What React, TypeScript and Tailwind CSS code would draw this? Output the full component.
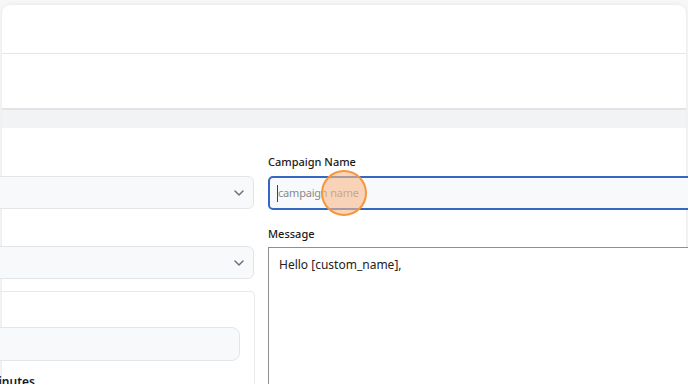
import React from 'react';

const font = { fontFamily: '"Noto Sans", "Open Sans", sans-serif' };

const Chevron = () => (
  <svg width="10" height="6" viewBox="0 0 10 6" fill="none" className="text-gray-500">
    <path d="M1 1l4 4 4-4" stroke="currentColor" strokeWidth="1.5" strokeLinecap="round" strokeLinejoin="round" />
  </svg>
);

const Select = () => (
  <div className="h-[33px] rounded-md border border-[#e3e5e8] bg-[#f8f9fa] flex items-center justify-end pr-[9px]">
    <Chevron />
  </div>
);

export default function App() {
  return (
    <div className="w-[688px] h-[384px] overflow-hidden bg-[#f7f7f8] pt-[5px]" style={font}>
      <div className="mx-[2px] bg-white rounded-t-lg shadow-[0_0_4px_rgba(0,0,0,0.08)] h-full">
        {/* header */}
        <div className="h-[49px] border-b border-[#e6e7ea]" />
        <div className="h-[56px] border-b-2 border-[#e1e3e7]" />
        <div className="h-[18px] bg-[#f2f3f5]" />

        {/* form */}
        <div className="-ml-[202px] flex gap-[14px] pt-[26px]">
          <div className="w-[454px] shrink-0 flex flex-col">
            <div className="h-[20px] mb-[2px]" />
            <Select />
            <div className="h-[37px]" />
            <Select />
            <div className="mt-[12px] -mr-[1px] border border-[#e8e9ec] rounded-t-sm px-[14px] pt-[35px] pb-[12px]">
              <div className="h-[34px] rounded-lg border border-[#e3e5e8] bg-[#f8f9fa]" />
              <div className="mt-[15px] text-right pr-[205px] text-[12px] font-semibold text-gray-900 leading-none">
                Delay in Minutes
              </div>
            </div>
          </div>

          <div className="w-[454px] shrink-0 flex flex-col">
            <label className="text-[11px] font-medium text-[#1a1a1a] leading-[15px] mb-[7px]">Campaign Name</label>
            <div className="relative h-[34px] rounded-[5px] border-2 border-[#3567c4] bg-[#f7f9fb] flex items-center pl-[7px]">
              <span className="w-px h-[17px] bg-gray-700" />
              <span className="text-[11px] tracking-[-0.2px] text-[#8a8a8a]">campaign name</span>
              <span className="absolute left-[51px] top-[-8px] w-[46px] h-[46px] rounded-full border-2 border-[#f7953b] bg-[#f9b98a]/60" />
            </div>
            <label className="mt-[16px] text-[11px] font-medium text-[#1a1a1a] leading-[15px] mb-[6px]">Message</label>
            <div className="h-[160px] border border-[#8f8f8f] bg-white px-[10px] pt-[8px] text-[12px] text-[#222]">
              Hello [custom_name],
            </div>
          </div>
        </div>
      </div>
    </div>
  );
}
